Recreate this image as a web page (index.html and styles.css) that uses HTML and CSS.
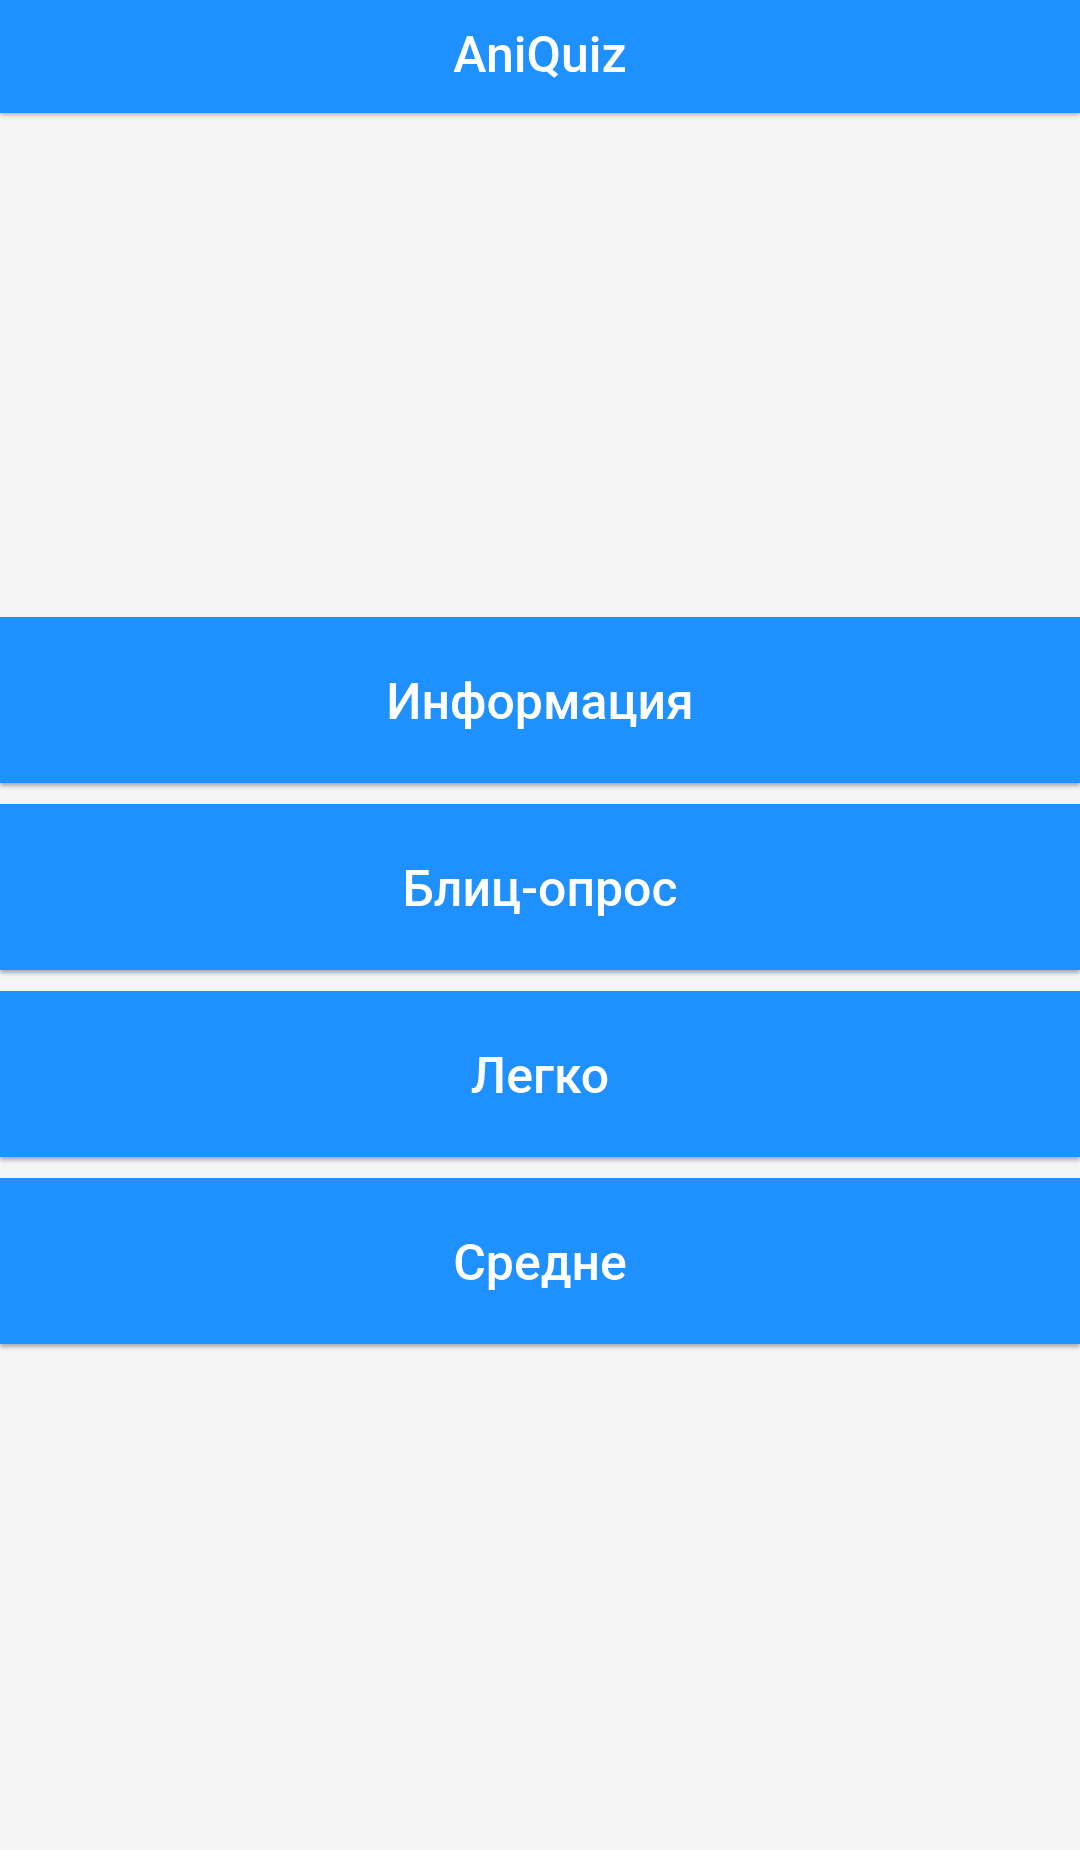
FILE: index.html
```html
<!DOCTYPE html>
<html lang="ru">
<head>
<meta charset="utf-8">
<title>AniQuiz</title>
<link rel="stylesheet" href="styles.css">
</head>
<body>
<header class="toolbar">
  <h1 class="toolbar-title">AniQuiz</h1>
</header>
<main class="menu">
  <button class="menu-btn">Информация</button>
  <button class="menu-btn">Блиц-опрос</button>
  <button class="menu-btn">Легко</button>
  <button class="menu-btn">Средне</button>
</main>
</body>
</html>
```

FILE: styles.css
```css
html, body {
  margin: 0;
  padding: 0;
  background: #f5f5f5;
  font-family: Roboto, "Noto Sans", sans-serif;
}

body {
  width: 1080px;
  min-height: 1850px;
}

.toolbar {
  position: relative;
  z-index: 2;
  height: 113px;
  background: #1e90ff;
  display: flex;
  align-items: center;
  justify-content: center;
  box-shadow: 0 2px 4px rgba(0, 0, 0, 0.28);
}

.toolbar-title {
  margin: 0;
  color: #ffffff;
  font-size: 50px;
  font-weight: 500;
  line-height: 1;
  padding-bottom: 4px;
}

.menu {
  display: flex;
  flex-direction: column;
  gap: 21px;
  padding-top: 504px;
}

.menu-btn {
  display: flex;
  align-items: center;
  justify-content: center;
  height: 166px;
  width: 100%;
  border: none;
  margin: 0;
  padding: 4px 0 0;
  background: #1e90ff;
  color: #ffffff;
  font-family: Roboto, "Noto Sans", sans-serif;
  font-size: 50px;
  font-weight: 500;
  box-shadow: 0 3px 4px rgba(0, 0, 0, 0.3);
}
```
